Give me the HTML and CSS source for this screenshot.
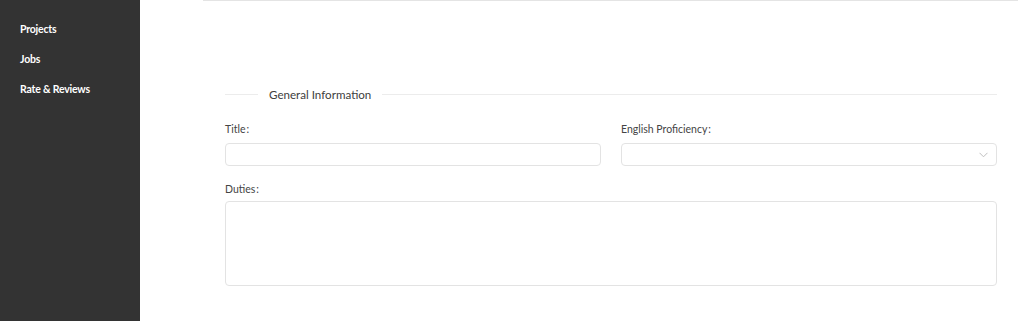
FILE: index.html
```html
<!DOCTYPE html>
<html>
<head>
<meta charset="utf-8">
<link rel="stylesheet" href="styles.css">
</head>
<body>
<div class="app">
  <nav class="sidebar">
    <a class="nav-item">Projects</a>
    <a class="nav-item">Jobs</a>
    <a class="nav-item">Rate &amp; Reviews</a>
  </nav>
  <main class="main">
    <div class="top-card"></div>
    <form class="form">
      <div class="divider">
        <span class="divider-line short"></span>
        <span class="divider-text">General Information</span>
        <span class="divider-line long"></span>
      </div>
      <div class="row">
        <div class="field">
          <label class="label">Title<span class="colon">:</span></label>
          <input class="input" type="text">
        </div>
        <div class="field">
          <label class="label">English Proficiency<span class="colon">:</span></label>
          <div class="select">
            <svg class="chevron" width="9" height="6" viewBox="0 0 9 6"><path d="M0.5 0.8 L4.5 4.8 L8.5 0.8" fill="none" stroke="#bfbfbf" stroke-width="1"/></svg>
          </div>
        </div>
      </div>
      <div class="field full">
        <label class="label">Duties<span class="colon">:</span></label>
        <textarea class="textarea"></textarea>
      </div>
    </form>
  </main>
</div>
</body>
</html>
```
FILE: styles.css
```css
* { box-sizing: border-box; }
html, body { margin: 0; padding: 0; }
body {
  font-family: Lato, "Open Sans", sans-serif;
  background: #fff;
  width: 1024px;
  height: 321px;
  overflow: hidden;
}
.app { display: flex; height: 321px; }
.sidebar {
  width: 140px;
  flex: none;
  background: #333333;
  padding: 22px 0 0 20px;
  display: flex;
  flex-direction: column;
  gap: 16px;
}
.nav-item {
  color: #fff;
  font-weight: 700;
  font-size: 10.5px;
  line-height: 14px;
  letter-spacing: -0.2px;
}
.main { flex: 1; display: flex; flex-direction: column; }
.top-card {
  height: 1px;
  margin: 0 6px 0 63px;
  background: #e4e4e4;
}
.form {
  padding: 80px 27px 0 85px;
  display: flex;
  flex-direction: column;
}
.divider {
  display: flex;
  align-items: center;
  height: 26px;
}
.divider-line { height: 1px; background: #ececec; }
.divider-line.short { width: 33px; }
.divider-line.long { flex: 1; }
.divider-text {
  padding: 0 11px;
  font-size: 11.6px;
  color: #404040;
}
.row {
  display: grid;
  grid-template-columns: 1fr 1fr;
  gap: 20px;
  margin-top: 8px;
}
.field { display: flex; flex-direction: column; }
.label {
  font-size: 10.5px;
  color: #444;
  height: 24px;
  line-height: 28px;
}
.colon { margin-left: 1px; }
.input, .select {
  height: 23px;
  border: 1px solid #e3e3e3;
  border-radius: 4px;
  background: #fff;
  margin-top: 4px;
}
.select {
  display: flex;
  align-items: center;
  justify-content: flex-end;
  padding-right: 8px;
}
.full .label { height: 35px; line-height: 24px; padding-top: 11px; }
.textarea {
  height: 85px;
  border: 1px solid #e3e3e3;
  border-radius: 4px;
  resize: none;
  margin: 0;
}
```
